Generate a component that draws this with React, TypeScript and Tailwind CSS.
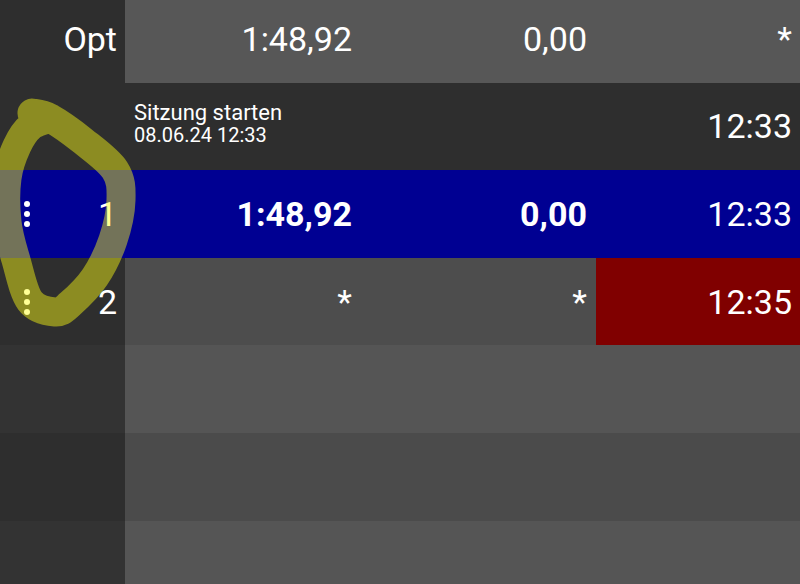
import React from "react";

type Row = {
  key: string;
  h: string;
  left: string;
  mid: string;
};

// empty filler rows below the laps
const fillers: Row[] = [
  { key: "f1", h: "h-[88px]", left: "bg-[#333333]", mid: "bg-[#555555]" },
  { key: "f2", h: "h-[88px]", left: "bg-[#2e2e2e]", mid: "bg-[#4b4b4b]" },
  { key: "f3", h: "h-[63px]", left: "bg-[#333333]", mid: "bg-[#555555]" },
];

// centre line of the marker scribble
const loop: [number, number][] = [
  [32, 113],
  [50, 118],
  [83, 141],
  [115, 170],
  [121, 200],
  [113, 240],
  [95, 277],
  [70, 304],
  [55, 312],
  [30, 301],
  [16, 260],
  [7, 222],
  [7, 178],
  [17, 146],
  [31, 126],
  [50, 118],
];

// smooth the points with a catmull-rom spline
function smooth(pts: [number, number][]) {
  let d = `M ${pts[0][0]} ${pts[0][1]}`;
  for (let i = 0; i < pts.length - 1; i++) {
    const p0 = pts[i - 1] ?? pts[i];
    const p1 = pts[i];
    const p2 = pts[i + 1];
    const p3 = pts[i + 2] ?? p2;
    const c1x = p1[0] + (p2[0] - p0[0]) / 6;
    const c1y = p1[1] + (p2[1] - p0[1]) / 6;
    const c2x = p2[0] - (p3[0] - p1[0]) / 6;
    const c2y = p2[1] - (p3[1] - p1[1]) / 6;
    d += ` C ${c1x} ${c1y}, ${c2x} ${c2y}, ${p2[0]} ${p2[1]}`;
  }
  return d;
}

function Dots() {
  return (
    <div className="flex flex-col items-center gap-[4px]">
      <span className="block h-[6px] w-[6px] rounded-full bg-white" />
      <span className="block h-[6px] w-[6px] rounded-full bg-white" />
      <span className="block h-[6px] w-[6px] rounded-full bg-white" />
    </div>
  );
}

export default function App() {
  return (
    <div
      className="relative w-[800px] h-[584px] overflow-hidden text-white bg-[#555555]"
      style={{ fontFamily: "Roboto, 'Noto Sans', sans-serif" }}
    >
      {/* Header */}
      <div className="grid grid-cols-[125px_235px_236px_1fr] h-[83px] text-[34px] leading-none">
        <div className="flex items-center justify-end pr-2 pb-[6px] bg-[#2e2e2e]">Opt</div>
        <div className="flex items-center justify-end pr-2 pb-[6px] bg-[#575757]">1:48,92</div>
        <div className="flex items-center justify-end pr-[9px] pb-[6px] bg-[#575757]">0,00</div>
        <div className="flex items-center justify-end pr-2 pb-[6px] bg-[#575757]">*</div>
      </div>

      {/* Session start */}
      <div className="grid grid-cols-[125px_1fr] h-[87px] bg-[#2e2e2e]">
        <div />
        <div className="flex items-center justify-between pl-[9px] pr-2">
          <div className="flex flex-col pb-[8px]">
            <span className="text-[22px] leading-[24px]">Sitzung starten</span>
            <span className="text-[20px] leading-[20px]">08.06.24 12:33</span>
          </div>
          <span className="text-[34px] leading-none pb-[2px]">12:33</span>
        </div>
      </div>

      {/* Lap 1 (selected) */}
      <div className="grid grid-cols-[125px_235px_236px_1fr] h-[88px] bg-[#000092] text-[34px] leading-none">
        <div className="flex items-center justify-between pl-[24px] pr-2">
          <Dots />
          <span>1</span>
        </div>
        <div className="flex items-center justify-end pr-2 font-bold">1:48,92</div>
        <div className="flex items-center justify-end pr-[9px] font-bold">0,00</div>
        <div className="flex items-center justify-end pr-2">12:33</div>
      </div>

      {/* Lap 2 */}
      <div className="grid grid-cols-[125px_235px_236px_1fr] h-[87px] text-[34px] leading-none">
        <div className="flex items-center justify-between pl-[24px] pr-2 bg-[#2e2e2e]">
          <Dots />
          <span>2</span>
        </div>
        <div className="flex items-center justify-end pr-2 bg-[#4d4d4d]">*</div>
        <div className="flex items-center justify-end pr-[9px] bg-[#4d4d4d]">*</div>
        <div className="flex items-center justify-end pr-2 bg-[#800000]">12:35</div>
      </div>

      {fillers.map((r) => (
        <div key={r.key} className={`grid grid-cols-[125px_1fr] ${r.h}`}>
          <div className={r.left} />
          <div className={r.mid} />
        </div>
      ))}

      {/* hand-drawn marker loop */}
      <svg
        className="absolute left-0 top-0 pointer-events-none"
        width="800"
        height="584"
        viewBox="0 0 800 584"
      >
        <path
          d={smooth(loop)}
          fill="none"
          stroke="#ffff14"
          strokeOpacity="0.45"
          strokeWidth="29"
          strokeLinecap="round"
          strokeLinejoin="round"
        />
      </svg>
    </div>
  );
}
